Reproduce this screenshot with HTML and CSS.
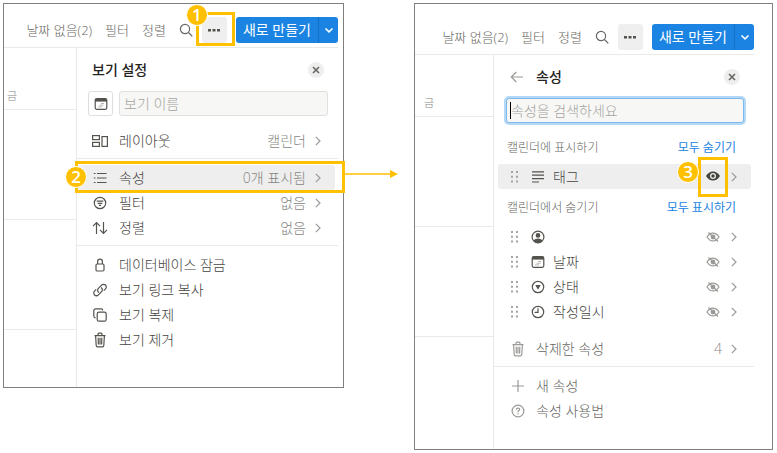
FILE: index.html
```
<!DOCTYPE html>
<html lang="ko">
<head>
    <meta charset="UTF-8">
    <meta name="viewport" content="width=device-width, initial-scale=1.0">
    <title>캘린더 속성 표시</title>
    <link rel="stylesheet" href="styles.css">
</head>
<body>
    <!-- shared icons -->
    <svg class="sprite" aria-hidden="true">
        <symbol id="search" viewBox="0 0 14 14"><circle cx="6" cy="6" r="4.6"/><path d="M9.5 9.5l3.8 3.8"/></symbol>
        <symbol id="dots" viewBox="0 0 14 14"><path class="solid" d="M1 6h3v2.4H1zM5.5 6h3v2.4h-3zM10 6h3v2.4h-3z"/></symbol>
        <symbol id="down" viewBox="0 0 10 10"><path d="M1.5 3.5L5 6.8l3.5-3.3"/></symbol>
        <symbol id="close" viewBox="0 0 10 10"><path d="M2 2l6 6M8 2L2 8"/></symbol>
        <symbol id="next" viewBox="0 0 6 10"><path d="M.8 .8L5 5 .8 9.2"/></symbol>
        <symbol id="back" viewBox="0 0 14 14"><path d="M13 7H1.5M6.3 2L1.3 7l5 5"/></symbol>
        <symbol id="calendar" viewBox="0 0 14 14"><rect x="1.2" y="1.7" width="11.6" height="10.6" rx="1.5"/><path class="solid" d="M1 2h12v2.600H1z"/><path class="faint" d="M7 6.500h3M5.500 8.200h4M4 9.900h4"/></symbol>
        <symbol id="layout" viewBox="0 0 18 14"><rect x="1.600" y="1.600" width="6.800" height="4"/><rect x="1.600" y="8.400" width="6.800" height="4"/><rect x="11" y="2.600" width="5.400" height="9.800"/></symbol>
        <symbol id="list" viewBox="0 0 14 14"><path d="M4 2.500h9.500M4 7h9.500M4 11.500h9.500M.8 2.500h1.700M.8 7h1.700M.8 11.500h1.700"/></symbol>
        <symbol id="filter" viewBox="0 0 14 14"><circle cx="7" cy="7" r="5.700"/><path d="M3.700 5.200h6.600M4.700 7.300h4.600M5.900 9.400h2.200"/></symbol>
        <symbol id="sort" viewBox="0 0 16 14"><path d="M4.500 13V1.800M1 5.200l3.500-3.500L8 5.200M11.500 1v11.200M8 8.800l3.500 3.500L15 8.800"/></symbol>
        <symbol id="lock" viewBox="0 0 14 14"><rect x="3" y="6" width="8" height="7" rx="1.200"/><path d="M4.600 6V3.800a2.400 2.600 0 0 1 4.800 0V6"/></symbol>
        <symbol id="link" viewBox="0 0 14 14"><path d="M6 9.600a2.700 2.700 0 0 1-.6-4.200L8.600 2.100a2.700 2.700 0 0 1 3.900 3.800L10.800 7.700M8 4.400a2.700 2.700 0 0 1 .6 4.200L5.400 11.900A2.700 2.700 0 0 1 1.500 8.100L3.200 6.300"/></symbol>
        <symbol id="copy" viewBox="0 0 14 14"><rect x="4.200" y="4.200" width="9" height="9" rx="1.800"/><path d="M2.600 9.800A1.800 1.800 0 0 1 .8 8V2.600A1.800 1.800 0 0 1 2.600.8H8a1.800 1.800 0 0 1 1.800 1.600"/></symbol>
        <symbol id="trash" viewBox="0 0 14 16"><path d="M1.500 3.600h11M5 3.400V2.200Q5 1.200 6 1.200h2q1 0 1 1v1.200M2.600 3.800l.6 9.700q.1 1.300 1.300 1.300h5q1.200 0 1.300-1.300l.6-9.700M5.200 5.800l.2 6.600M7 5.800v6.600M8.800 5.800l-.2 6.600"/></symbol>
        <symbol id="grip" viewBox="0 0 8 12"><path class="solid" d="M0 0h2v2H0zM5 0h2v2H5zM0 4.700h2v2H0zM5 4.700h2v2H5zM0 9.400h2v2H0zM5 9.400h2v2H5z"/></symbol>
        <symbol id="text" viewBox="0 0 14 14"><path d="M1 1.800h12M1 5.200h12M1 8.600h12M1 12h7"/></symbol>
        <symbol id="person" viewBox="0 0 14 14"><circle cx="7" cy="7" r="5.900"/><circle class="solid" cx="7" cy="5.400" r="2.300"/><path class="solid" d="M2.400 10.400Q4 8.500 7 8.500t4.600 1.900Q10 13 7 13T2.400 10.400z"/></symbol>
        <symbol id="status" viewBox="0 0 14 14"><circle cx="7" cy="7" r="5.700"/><path class="solid" d="M4.300 5h5.400L7 9.800z"/></symbol>
        <symbol id="clock" viewBox="0 0 14 14"><circle cx="7" cy="7" r="5.700"/><path d="M7 3.200V7.300H3.600"/></symbol>
        <symbol id="eye" viewBox="0 0 14 10"><path class="solid" fill-rule="evenodd" d="M0 5Q2.800.4 7 .4T14 5Q11.200 9.600 7 9.600T0 5zM7 2a3 3 0 1 0 0 6 3 3 0 0 0 0-6z"/><circle class="solid" cx="7" cy="5" r="1.700"/></symbol>
        <symbol id="hidden" viewBox="0 0 14 12"><path d="M1 6q2.500-3.900 6-3.900T13 6q-2.500 3.900-6 3.900T1 6zM2.500 1.500l9.500 9"/><circle class="solid" cx="7" cy="6" r="2.400"/></symbol>
        <symbol id="plus" viewBox="0 0 14 14"><path d="M7 1v12M1 7h12"/></symbol>
        <symbol id="help" viewBox="0 0 14 14"><circle cx="7" cy="7" r="5.900"/><path d="M5.300 5.700Q5.300 4.100 7 4.100t1.700 1.500Q8.700 6.500 7 7.200V8.200M7 9.200v1.200"/></symbol>
    </svg>

    <main class="guide">
        <section class="screen screen-view">
            <header class="toolbar">
                <button class="tool">날짜 없음(2)</button>
                <button class="tool">필터</button>
                <button class="tool">정렬</button>
                <button class="tool" aria-label="검색"><svg class="icon"><use href="#search"/></svg></button>
                <div class="spot">
                    <button class="more" aria-label="더 보기"><svg class="icon"><use href="#dots"/></svg></button>
                    <span class="mark mark-more"></span>
                    <span class="badge badge-more">1</span>
                </div>
                <div class="create">
                    <button class="create-main">새로 만들기</button>
                    <button class="create-menu" aria-label="템플릿"><svg class="icon-tiny"><use href="#down"/></svg></button>
                </div>
            </header>
            <div class="content">
                <div class="calendar">
                    <div class="day">금</div>
                    <div class="cell"></div>
                    <div class="cell"></div>
                </div>
                <div class="panel">
                    <div class="panel-head">
                        <h2>보기 설정</h2>
                        <button class="close" aria-label="닫기"><svg class="icon-tiny"><use href="#close"/></svg></button>
                    </div>
                    <div class="name-row">
                        <button class="icon-button" aria-label="아이콘"><svg class="icon"><use href="#calendar"/></svg></button>
                        <input class="field" type="text" placeholder="보기 이름" aria-label="보기 이름">
                    </div>
                    <div class="group">
                        <button class="row"><svg class="icon-wide"><use href="#layout"/></svg><span class="label">레이아웃</span><span class="value">캘린더</span><svg class="next"><use href="#next"/></svg></button>
                    </div>
                    <div class="group">
                        <div class="spot">
                            <button class="row active"><svg class="icon-wide"><use href="#list"/></svg><span class="label">속성</span><span class="value">0개 표시됨</span><svg class="next"><use href="#next"/></svg></button>
                            <span class="mark mark-row"></span>
                            <span class="badge badge-row">2</span>
                        </div>
                        <button class="row"><svg class="icon-wide"><use href="#filter"/></svg><span class="label">필터</span><span class="value">없음</span><svg class="next"><use href="#next"/></svg></button>
                        <button class="row"><svg class="icon-wide"><use href="#sort"/></svg><span class="label">정렬</span><span class="value">없음</span><svg class="next"><use href="#next"/></svg></button>
                    </div>
                    <div class="group">
                        <button class="row"><svg class="icon-wide"><use href="#lock"/></svg><span class="label">데이터베이스 잠금</span></button>
                        <button class="row"><svg class="icon-wide"><use href="#link"/></svg><span class="label">보기 링크 복사</span></button>
                        <button class="row"><svg class="icon-wide"><use href="#copy"/></svg><span class="label">보기 복제</span></button>
                        <button class="row"><svg class="icon-wide tall"><use href="#trash"/></svg><span class="label">보기 제거</span></button>
                    </div>
                </div>
            </div>
        </section>

        <svg class="arrow" viewBox="0 0 54 10" aria-hidden="true"><path d="M0 5h48" stroke="#ffc000" stroke-width="1.300"/><path d="M46 1l8 4-8 4z" fill="#ffc000"/></svg>

        <section class="screen screen-props">
            <header class="toolbar">
                <button class="tool">날짜 없음(2)</button>
                <button class="tool">필터</button>
                <button class="tool">정렬</button>
                <button class="tool" aria-label="검색"><svg class="icon"><use href="#search"/></svg></button>
                <button class="more" aria-label="더 보기"><svg class="icon"><use href="#dots"/></svg></button>
                <div class="create">
                    <button class="create-main">새로 만들기</button>
                    <button class="create-menu" aria-label="템플릿"><svg class="icon-tiny"><use href="#down"/></svg></button>
                </div>
            </header>
            <div class="content">
                <div class="calendar">
                    <div class="day">금</div>
                    <div class="cell"></div>
                    <div class="cell"></div>
                </div>
                <div class="panel">
                    <div class="panel-head">
                        <button class="back" aria-label="뒤로"><svg class="icon"><use href="#back"/></svg></button>
                        <h2>속성</h2>
                        <button class="close" aria-label="닫기"><svg class="icon-tiny"><use href="#close"/></svg></button>
                    </div>
                    <div class="search-row">
                        <input class="field focused" type="text" placeholder="속성을 검색하세요" aria-label="속성 검색">
                        <span class="caret"></span>
                    </div>
                    <div class="section-head">
                        <h3>캘린더에 표시하기</h3>
                        <button class="all">모두 숨기기</button>
                    </div>
                    <div class="row active">
                        <svg class="grip"><use href="#grip"/></svg><svg class="icon"><use href="#text"/></svg><span class="label">태그</span>
                        <div class="spot">
                            <button class="eye shown" aria-label="태그 숨기기"><svg><use href="#eye"/></svg></button>
                            <span class="mark mark-eye"></span>
                            <span class="badge badge-eye">3</span>
                        </div>
                        <svg class="next"><use href="#next"/></svg>
                    </div>
                    <div class="section-head">
                        <h3>캘린더에서 숨기기</h3>
                        <button class="all">모두 표시하기</button>
                    </div>
                    <div class="row">
                        <svg class="grip"><use href="#grip"/></svg><svg class="icon"><use href="#person"/></svg><span class="label"></span>
                        <button class="eye" aria-label="사람 표시"><svg><use href="#hidden"/></svg></button><svg class="next"><use href="#next"/></svg>
                    </div>
                    <div class="row">
                        <svg class="grip"><use href="#grip"/></svg><svg class="icon"><use href="#calendar"/></svg><span class="label">날짜</span>
                        <button class="eye" aria-label="날짜 표시"><svg><use href="#hidden"/></svg></button><svg class="next"><use href="#next"/></svg>
                    </div>
                    <div class="row">
                        <svg class="grip"><use href="#grip"/></svg><svg class="icon"><use href="#status"/></svg><span class="label">상태</span>
                        <button class="eye" aria-label="상태 표시"><svg><use href="#hidden"/></svg></button><svg class="next"><use href="#next"/></svg>
                    </div>
                    <div class="row">
                        <svg class="grip"><use href="#grip"/></svg><svg class="icon"><use href="#clock"/></svg><span class="label">작성일시</span>
                        <button class="eye" aria-label="작성일시 표시"><svg><use href="#hidden"/></svg></button><svg class="next"><use href="#next"/></svg>
                    </div>
                    <div class="deleted">
                        <button class="row muted"><svg class="icon tall"><use href="#trash"/></svg><span class="label">삭제한 속성</span><span class="value">4</span><svg class="next"><use href="#next"/></svg></button>
                    </div>
                    <div class="group">
                        <button class="row muted"><svg class="icon"><use href="#plus"/></svg><span class="label">새 속성</span></button>
                        <button class="row muted"><svg class="icon"><use href="#help"/></svg><span class="label">속성 사용법</span></button>
                    </div>
                </div>
            </div>
        </section>
    </main>
</body>
</html>
```

FILE: styles.css
```
* {
    box-sizing: border-box;
}

body {
    margin: 0;
    background-color: #fff;
    color: #45433e;
    font-family: "Open Sans", "Noto Sans CJK KR", sans-serif;
    font-size: 14px;
    font-weight: 300;
    line-height: 20px;
}

h2,
h3 {
    margin: 0;
    font-size: 14px;
}

button {
    padding: 0;
    border: none;
    background: none;
    color: inherit;
    font: inherit;
    text-align: left;
    white-space: nowrap;
    cursor: pointer;
}

svg {
    display: block;
    flex: none;
    fill: none;
    stroke: currentColor;
    stroke-width: 1.2;
}

.solid {
    fill: currentColor;
    stroke: none;
}

.faint {
    stroke: #b8b7b3;
    stroke-width: 1;
}

.sprite {
    position: absolute;
    width: 0;
    height: 0;
}

.icon,
.icon-wide {
    width: 14px;
    height: 14px;
    color: #55534e;
}

.icon-wide {
    width: 18px;
}

.tall {
    height: 16px;
}

.icon-tiny {
    width: 10px;
    height: 10px;
    stroke-width: 1.6;
}

/* two screens with the arrow between them */
.guide {
    display: grid;
    grid-template-columns: 341fr 70px 359fr;
    align-items: start;
    padding: 3px 4px 3px 3px;
}

.screen {
    min-width: 0;
    border: 1px solid #7f7f7f;
}

.screen-view {
    padding: 13px 5px 0 0;
}

.screen-props {
    padding: 20px 18px 0 0;
}

.arrow {
    width: 54px;
    height: 10px;
    margin-top: 166px;
    stroke: none;
}

/* toolbar */
.toolbar {
    display: flex;
    justify-content: flex-end;
    align-items: center;
    gap: 9px;
    padding-bottom: 4px;
    border-bottom: 1px solid #e9e9e7;
}

.tool {
    margin-right: 4px;
    color: #686763;
    font-size: 13px;
}

.tool .icon {
    color: #686763;
    margin-right: -4px;
}

.more {
    display: grid;
    place-items: center;
    width: 25px;
    height: 26px;
    border-radius: 3px;
    background-color: #efefef;
}

.create {
    display: flex;
    height: 26px;
    border-radius: 3px;
    background-color: #1b84e2;
    color: #fff;
    font-weight: 400;
}

.create-main {
    padding: 0 7px;
}

.create-menu {
    display: grid;
    place-items: center;
    width: 20px;
    border-left: 1px solid #1670c2;
}

/* calendar strip */
.content {
    display: flex;
}

.calendar {
    flex: none;
    width: 72px;
}

.screen-props .calendar {
    width: 78px;
}

.day {
    height: 62px;
    padding: 38px 0 0 3px;
    border-bottom: 1px solid #e9e9e7;
    color: #868581;
    font-size: 11px;
}

.screen-props .day {
    padding-left: 9px;
}

.cell {
    height: 110px;
    border-bottom: 1px solid #e9e9e7;
}

/* settings panel */
.panel {
    flex: 1;
    min-width: 0;
    padding-bottom: 30px;
    border-left: 1px solid #e9e9e7;
}

.screen-props .panel {
    padding-bottom: 21px;
}

.panel-head {
    display: flex;
    align-items: center;
    height: 43px;
    padding: 0 14px 0 15px;
}

.panel-head h2 {
    flex: 1;
    font-weight: 500;
    color: #25231e;
}

.back {
    margin: 0 12px 0 1px;
}

.back .icon {
    color: #9b9a97;
}

.close {
    display: grid;
    place-items: center;
    width: 16px;
    height: 16px;
    border-radius: 50%;
    background-color: #eee;
    color: #686763;
}

.name-row {
    display: flex;
    gap: 6px;
    margin-bottom: 6px;
    padding: 0 10px 0 11px;
}

.icon-button {
    display: grid;
    place-items: center;
    width: 25px;
    height: 25px;
    border: 1px solid #dededc;
    border-radius: 3px;
}

.field {
    flex: 1;
    min-width: 0;
    height: 25px;
    padding: 0 4px;
    border: 1px solid #e0e0de;
    border-radius: 3px;
    background-color: #f7f7f5;
    font: inherit;
}

.field::placeholder {
    color: #a5a4a1;
}

.search-row {
    position: relative;
    display: flex;
    padding: 0 10px 0 12px;
}

.focused {
    border-color: #7db8ec;
    box-shadow: 0 0 0 2px #b5d8f7;
}

.caret {
    position: absolute;
    left: 16px;
    top: 4px;
    width: 1px;
    height: 17px;
    background-color: #000;
}

.group {
    padding: 6px 3px 5px 1px;
}

.group + .group,
.deleted + .group {
    border-top: 1px solid #e9e9e7;
}

.row {
    display: flex;
    align-items: center;
    width: 100%;
    height: 25px;
    padding: 0 14px 0 13px;
    border-radius: 3px;
}

.active {
    background-color: #eee;
}

.label {
    flex: 1;
    margin-left: 10px;
}

.value {
    margin-right: 9px;
    color: #868581;
}

.next {
    width: 6px;
    height: 10px;
    color: #9b9a97;
}

/* property list */
.section-head {
    display: flex;
    justify-content: space-between;
    align-items: center;
    height: 35px;
    padding: 2px 18px 0 13px;
    font-size: 12px;
}

.search-row + .section-head {
    height: 41px;
    padding-top: 8px;
}

.section-head h3 {
    color: #686763;
    font-size: 12px;
    font-weight: 300;
}

.all {
    color: #1b84e2;
    font-weight: 400;
}

.panel > .row {
    width: auto;
    margin: 0 3px 0 4px;
}

.grip {
    width: 8px;
    height: 12px;
    margin-right: 12px;
    color: #a5a4a1;
}

.panel > .row .label {
    margin-left: 8px;
}

.eye {
    margin-right: 11px;
    color: #9b9a97;
}

.eye svg {
    width: 14px;
    height: 12px;
}

.shown {
    color: #45433e;
}

.deleted {
    padding: 12px 3px 5px 3px;
}

.muted {
    color: #686763;
}

.muted .icon {
    color: #9b9a97;
}

.deleted .row,
.screen-props .group .row {
    padding-left: 14px;
}

.deleted + .group {
    padding-left: 3px;
}

.screen-props .muted .label {
    margin-left: 11px;
}

/* step marks lying over the screens */
.spot {
    position: relative;
}

.mark {
    position: absolute;
    border: 3px solid #ffc000;
    pointer-events: none;
}

.mark-more {
    inset: -5px -8px -3px -6px;
}

.mark-row {
    inset: -4px -10px -3px -3px;
}

.mark-eye {
    inset: -10px 3px -10px -8px;
}

.badge {
    position: absolute;
    width: 22px;
    height: 22px;
    border: 1px solid #fff;
    border-radius: 50%;
    background-color: #ffc000;
    color: #fff;
    font-size: 17px;
    font-weight: 600;
    line-height: 20px;
    text-align: center;
}

.badge-more {
    left: -16px;
    top: -13px;
}

.badge-row {
    left: -13px;
    top: 1px;
}

.badge-eye {
    left: -29px;
    top: -6px;
}
```
